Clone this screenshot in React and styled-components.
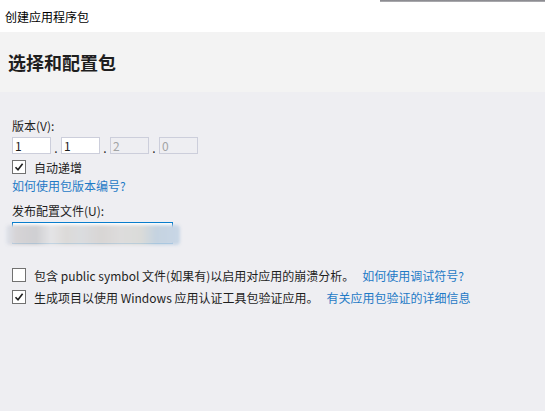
import React from "react";
import styled, { createGlobalStyle } from "styled-components";

const GlobalStyle = createGlobalStyle`
  html, body {
    margin: 0;
    padding: 0;
    background: #eeeef2;
  }
  body {
    font-family: "Microsoft YaHei", "Noto Sans CJK SC", "Noto Sans", sans-serif;
    font-size: 12px;
    color: #1e1e1e;
  }
`;

const Window = styled.div`
  width: 545px;
  height: 411px;
  display: flex;
  flex-direction: column;
  background: #eeeef2;
  overflow: hidden;
`;

const TitleBar = styled.div`
  height: 32px;
  background: #ffffff;
  position: relative;
  display: flex;
  align-items: center;
  padding-left: 5px;
  font-size: 12px;
  color: #000;

  &::after {
    content: "";
    position: absolute;
    top: 0;
    left: 380px;
    right: 0;
    height: 2px;
    background: linear-gradient(#7f7f85, #b4b4b8);
  }
`;

const Header = styled.div`
  height: 60px;
  background: #f3f3f3;
  display: flex;
  align-items: center;
  padding-left: 8px;
  font-size: 18px;
  font-weight: bold;
  color: #1e1e1e;
`;

const Body = styled.div`
  flex: 1;
  padding: 26px 12px 0 12px;
  display: flex;
  flex-direction: column;
`;

const Label = styled.div`
  height: 16px;
  line-height: 16px;
  margin-bottom: ${(p) => p.$mb || 0}px;
  margin-top: ${(p) => p.$mt || 0}px;
`;

const VersionRow = styled.div`
  display: flex;
  align-items: flex-end;
  height: 17px;
`;

const VersionBox = styled.div`
  width: 39px;
  height: 17px;
  box-sizing: border-box;
  border: 1px solid #cccedb;
  background: ${(p) => (p.$disabled ? "#eeeef2" : "#ffffff")};
  color: ${(p) => (p.$disabled ? "#a2a4a5" : "#1e1e1e")};
  padding-left: 2px;
  line-height: 15px;
`;

const Dot = styled.span`
  width: 10px;
  text-align: center;
  line-height: 12px;
`;

const CheckRow = styled.div`
  display: flex;
  align-items: center;
  gap: 8px;
  height: 14px;
  margin-top: ${(p) => p.$mt || 0}px;
  white-space: nowrap;
`;

const Box = styled.span`
  width: 14px;
  height: 14px;
  box-sizing: border-box;
  border: 1px solid #717171;
  background: #ffffff;
  display: inline-flex;
  align-items: center;
  justify-content: center;
  flex: none;
`;

const Link = styled.span`
  color: #1e7ac6;
`;

const LinkLine = styled.div`
  height: 16px;
  line-height: 16px;
  margin-top: ${(p) => p.$mt || 0}px;
  color: #1e7ac6;
`;

const ComboWrap = styled.div`
  position: relative;
  width: 161px;
  height: 22px;
  margin-top: 3px;
`;

const Combo = styled.div`
  width: 161px;
  height: 22px;
  box-sizing: border-box;
  border: 1px solid #007acc;
  background: #ffffff;
`;

const Smudge = styled.div`
  position: absolute;
  left: -6px;
  top: 3px;
  width: 174px;
  height: 20px;
  border-radius: 4px;
  background: linear-gradient(
    90deg,
    #dfe3ec 0px,
    #d6d4d6 10px,
    #cfcfd2 30px,
    #e4e4e6 45px,
    #dcdad8 60px,
    #dadcdf 75px,
    #d8d5d4 95px,
    #dddcdc 115px,
    #dadbd9 135px,
    #c5d3e0 150px,
    #c8d6e6 174px
  );
  filter: blur(1.5px);
`;

const Check = () => (
  <svg width="10" height="10" viewBox="0 0 10 10">
    <path d="M1.5 5.2 L4 7.8 L8.6 1.8" fill="none" stroke="#1e1e1e" strokeWidth="1.6" />
  </svg>
);

export default function App() {
  return (
    <>
      <GlobalStyle />
      <Window>
        <TitleBar>创建应用程序包</TitleBar>
        <Header>选择和配置包</Header>
        <Body>
          <Label $mb={3}>版本(V):</Label>
          <VersionRow>
            <VersionBox>1</VersionBox>
            <Dot>.</Dot>
            <VersionBox>1</VersionBox>
            <Dot>.</Dot>
            <VersionBox $disabled>2</VersionBox>
            <Dot>.</Dot>
            <VersionBox $disabled>0</VersionBox>
          </VersionRow>
          <CheckRow $mt={6}>
            <Box><Check /></Box>
            自动递增
          </CheckRow>
          <LinkLine $mt={4}>如何使用包版本编号?</LinkLine>
          <Label $mt={9}>发布配置文件(U):</Label>
          <ComboWrap>
            <Combo />
            <Smudge />
          </ComboWrap>
          <CheckRow $mt={24}>
            <Box />
            包含 public symbol 文件(如果有)以启用对应用的崩溃分析。
            <Link>如何使用调试符号?</Link>
          </CheckRow>
          <CheckRow $mt={8}>
            <Box><Check /></Box>
            生成项目以使用 Windows 应用认证工具包验证应用。
            <Link>有关应用包验证的详细信息</Link>
          </CheckRow>
        </Body>
      </Window>
    </>
  );
}
